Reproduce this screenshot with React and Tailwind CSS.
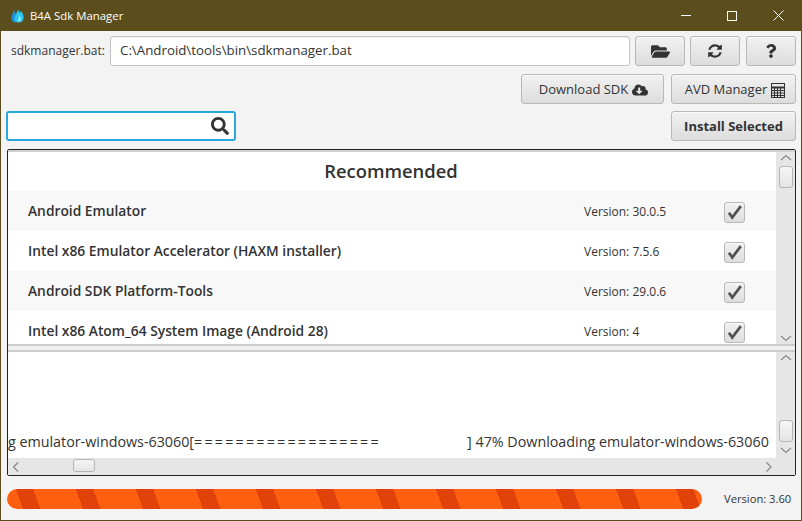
import { FaFolderOpen, FaQuestion, FaCloudDownloadAlt, FaSearch } from "react-icons/fa"

const rows = [
  { name: "Android Emulator", version: "30.0.5" },
  { name: "Intel x86 Emulator Accelerator (HAXM installer)", version: "7.5.6" },
  { name: "Android SDK Platform-Tools", version: "29.0.6" },
  { name: "Intel x86 Atom_64 System Image (Android 28)", version: "4" },
]

const btn = "flex items-center justify-center rounded-[3px] border border-[#b8b8b8] bg-gradient-to-b from-[#f1f1f1] to-[#dddddd] shadow-[inset_0_1px_0_#fafafa] text-[#333]"
const thumb = "rounded-[3px] border border-[#b4b4b4] bg-gradient-to-b from-[#f6f6f6] to-[#e4e4e4]"

function Chevron({ dir }) {
  const d = {
    up: "M1 6 L6 1.5 L11 6",
    down: "M1 4 L6 8.5 L11 4",
    left: "M6 1.5 L1.5 6 L6 10.5",
    right: "M1.5 1.5 L6 6 L1.5 10.5",
  }[dir]
  return (
    <svg width="12" height="12" viewBox="0 0 12 12" fill="none" stroke="#8a8a8a" strokeWidth="1.3">
      <path d={d} />
    </svg>
  )
}

function RefreshIcon() {
  return (
    <svg width="16" height="16" viewBox="0 0 1792 1792" fill="#333">
      <path d="M1639 1056q0 5-1 7-64 268-268 434.5t-478 166.5q-146 0-282.5-55t-243.5-157l-129 129q-19 19-45 19t-45-19-19-45v-448q0-26 19-45t45-19h448q26 0 45 19t19 45-19 45l-137 137q71 66 161 102t187 36q134 0 250-65t186-179q11-17 53-117 8-23 30-23h192q13 0 22.5 9.5t9.5 22.5zm25-800v448q0 26-19 45t-45 19h-448q-26 0-45-19t-19-45 19-45l138-138q-148-137-349-137-134 0-250 65t-186 179q-11 17-53 117-8 23-30 23h-199q-13 0-22.5-9.5t-9.5-22.5v-7q65-268 270-434.5t480-166.5q146 0 284 55.5t245 156.5l130-129q19-19 45-19t45 19 19 45z" />
    </svg>
  )
}

function CalcIcon() {
  return (
    <svg width="14" height="15" viewBox="0 0 14 15" fill="none" stroke="#333" strokeWidth="1">
      <rect x="0.5" y="0.5" width="13" height="14" />
      <path d="M0.5 4.5 H13.5" strokeWidth="2" />
      <path d="M0.5 7.5 H13.5 M0.5 10 H13.5 M0.5 12.5 H13.5 M3.5 5 V14.5 M6.5 5 V14.5 M9.5 5 V14.5" />
    </svg>
  )
}

function Row({ row, odd }) {
  return (
    <div className={`flex h-10 shrink-0 items-center pt-[2px] pl-5 ${odd ? "bg-white" : "bg-[#f8f8f8]"}`}>
      <span className="mb-[2px] w-[556px] text-[13.8px] font-semibold text-[#333]">{row.name}</span>
      <span className="w-[140px] text-[12px] text-[#333]">Version: {row.version}</span>
      <span className={`${btn} size-[21px]`}>
        <svg width="21" height="21" viewBox="0 0 21 21" fill="none" stroke="#505050" strokeWidth="3">
          <path d="M4.3 10.7 L8 16 L17.5 3.5" />
        </svg>
      </span>
    </div>
  )
}

export default function App() {
  return (
    <div className="flex h-[521px] w-[802px] flex-col overflow-hidden border-x border-b border-[#5c4d1c] bg-[#f3f3f3] font-['Open_Sans','Noto_Sans',sans-serif] text-[#333]">
      {/* title bar */}
      <div className="-mx-px flex h-[31px] shrink-0 items-center bg-[#5c4d1c] pl-[11px] text-white">
        <svg width="13" height="14" viewBox="0 0 13 14" className="mr-[6px]">
          <path d="M0.5 9 C0.5 6 2 5 3 1 C4 3 5 5 5.5 7 L7 11 C6 13 4 13.5 3 13.5 C1.5 13 0.5 11 0.5 9 Z" fill="#1c8fd6" />
          <path d="M5 5 C6 4 6.5 2 7 0.5 C8 2 8.5 3 8.5 4 L10 2 C12 5 13 7 12.5 10 C12 12.5 10 13.5 8 13.5 C5 13.5 3 11.5 3.5 9 C3.7 7.5 4.5 6 5 5 Z" fill="#2bc8f2" />
          <path d="M8 6 C9 7.5 10 9 9.5 11 C9 12 8 12.5 7 12 C8 10 8 8 8 6 Z" fill="#bdf0fc" />
        </svg>
        <span className="text-[11.4px]">B4A Sdk Manager</span>
        <div className="ml-auto flex items-center pr-px">
          <div className="flex h-[31px] w-[46px] items-center justify-center">
            <div className="h-px w-[10px] bg-white" />
          </div>
          <div className="flex h-[31px] w-[46px] items-center justify-center">
            <div className="size-[10px] border border-white" />
          </div>
          <div className="flex h-[31px] w-[46px] items-center justify-center">
            <svg width="11" height="11" viewBox="0 0 11 11" stroke="#fff" strokeWidth="1">
              <path d="M0.5 0.5 L10.5 10.5 M10.5 0.5 L0.5 10.5" />
            </svg>
          </div>
        </div>
      </div>

      {/* sdk path row */}
      <div className="mt-[5px] flex h-[30px] shrink-0 items-center pr-[5px] pl-[10px]">
        <span className="w-[99px] text-[12px]">sdkmanager.bat:</span>
        <div className="flex h-[30px] w-[520px] items-center rounded-[3px] border border-[#c4c4c4] bg-white pl-[9px] text-[13.3px] shadow-[inset_0_1px_1px_#eee]">
          C:\Android\tools\bin\sdkmanager.bat
        </div>
        <button className={`${btn} ml-[5px] h-[30px] w-[50px]`}>
          <FaFolderOpen className="size-[19px]" />
        </button>
        <button className={`${btn} ml-[5px] h-[30px] w-[50px]`}>
          <RefreshIcon />
        </button>
        <button className={`${btn} ml-[6px] h-[30px] w-[50px]`}>
          <FaQuestion className="size-[14px]" />
        </button>
      </div>

      {/* download row */}
      <div className="mt-[8px] flex h-[30px] shrink-0 justify-end gap-[7px] pr-[5px]">
        <button className={`${btn} w-[143px] gap-[4px] pt-[2px] pl-[2px] text-[13px]`}>
          Download SDK <FaCloudDownloadAlt className="size-[16px]" />
        </button>
        <button className={`${btn} w-[125px] gap-[4px] pt-[2px] pl-[3px] text-[13px]`}>
          AVD Manager <CalcIcon />
        </button>
      </div>

      {/* search row */}
      <div className="mt-[7px] flex h-[30px] shrink-0 items-center justify-between px-[5px]">
        <div className="flex h-[30px] w-[230px] items-center justify-end rounded-[3px] border-2 border-[#29a8e0] bg-white pr-[5px]">
          <FaSearch className="size-[18px] text-[#333]" />
        </div>
        <button className={`${btn} h-[30px] w-[125px] pt-[2px] text-[13px] font-bold`}>Install Selected</button>
      </div>

      {/* split pane */}
      <div className="mt-[8px] ml-[6px] flex h-[327px] w-[789px] shrink-0 flex-col rounded-[2px] border border-[#222] bg-white">
        <div className="flex h-[194px] shrink-0 border-t-2 border-[#d0d0d0]">
          <div className="flex min-w-0 flex-1 flex-col overflow-hidden">
            <div className="flex h-[39px] shrink-0 items-center justify-center pr-[2px] pb-[2px] text-[18.4px] font-semibold">Recommended</div>
            {rows.map((row, i) => (
              <Row key={row.name} row={row} odd={i % 2 === 1} />
            ))}
          </div>
          <div className="flex w-[19px] shrink-0 flex-col items-center justify-between bg-[#e6e6e6] pt-[2px]">
            <div className="flex flex-col items-center">
              <Chevron dir="up" />
              <div className={`${thumb} h-[22px] w-[14px]`} />
            </div>
            <Chevron dir="down" />
          </div>
        </div>
        <div className="h-2 shrink-0 border-y-2 border-[#cccccc] bg-[#f0f0f0]" />
        <div className="flex min-h-0 flex-1 flex-col">
          <div className="flex min-h-0 flex-1">
            <div className="flex min-w-0 flex-1 items-end overflow-hidden bg-white pb-[6px] text-[14.3px] whitespace-pre">
              <span>g emulator-windows-63060[</span>
              <span className="w-[273px] shrink-0 tracking-[2.2px]">==================</span>
              <span>] 47% Downloading emulator-windows-63060</span>
            </div>
            <div className="flex w-[19px] shrink-0 flex-col items-center justify-between bg-[#e6e6e6] py-[2px]">
              <Chevron dir="up" />
              <div className="flex flex-col items-center gap-[2px]">
                <div className={`${thumb} h-[22px] w-[14px]`} />
                <Chevron dir="down" />
              </div>
            </div>
          </div>
          <div className="flex h-[17px] shrink-0 items-center bg-[#e6e6e6] pr-[18px] pl-1">
            <Chevron dir="left" />
            <div className={`${thumb} mb-[3px] ml-[49px] h-[13px] w-[22px]`} />
            <div className="ml-auto">
              <Chevron dir="right" />
            </div>
          </div>
        </div>
      </div>

      {/* progress */}
      <div className="mt-[13px] flex shrink-0 items-center pl-[6px]">
        <div className="h-5 w-[695px] rounded-[10px] bg-[repeating-linear-gradient(70deg,#ff5f0f_0,#ff5f0f_15px,#e0420a_15px,#e0420a_31.4px,#ff5f0f_31.4px,#ff5f0f_56.4px)]" />
        <span className="ml-[22px] text-[11.2px]">Version: 3.60</span>
      </div>
    </div>
  )
}
